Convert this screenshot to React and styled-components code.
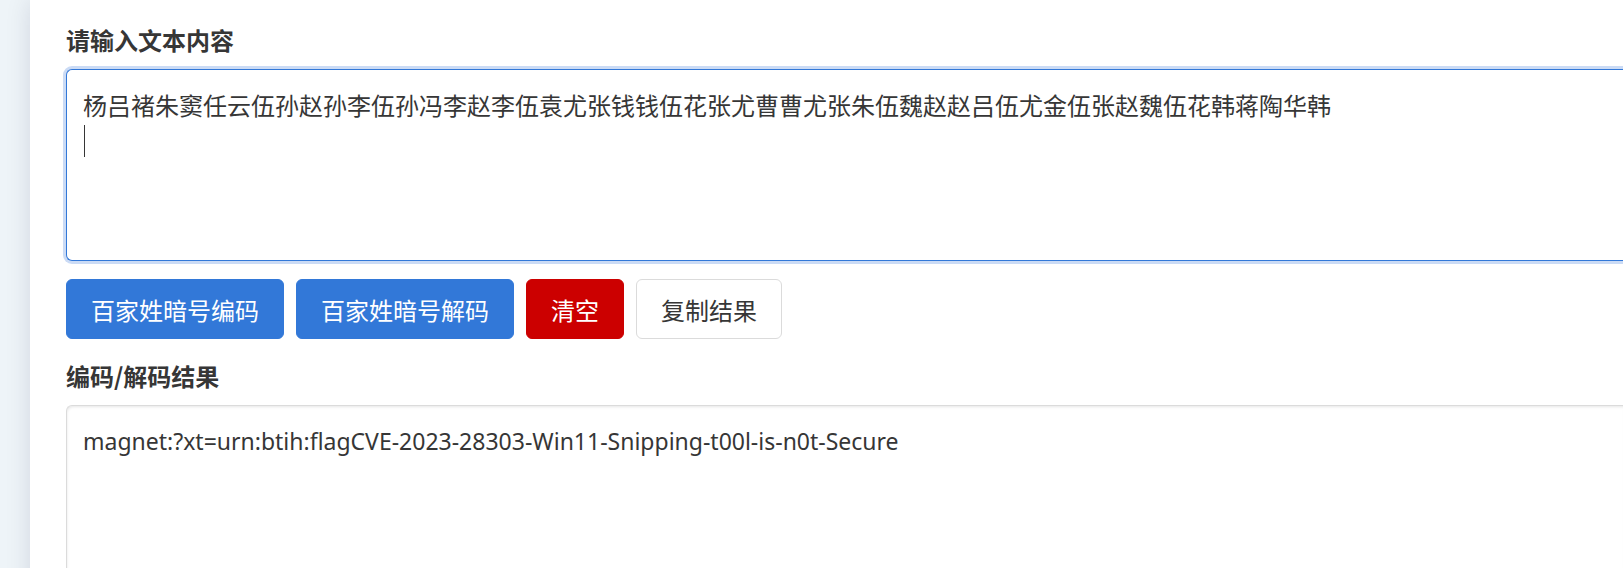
import React, { useEffect, useRef, useState } from "react";
import styled, { createGlobalStyle, css } from "styled-components";

const GlobalStyle = createGlobalStyle`
  * { box-sizing: border-box; }
  body {
    margin: 0;
    background: #eef4f8;
    color: #363636;
    font-family: "Noto Sans", "Noto Sans CJK SC", sans-serif;
    font-size: 24px;
    line-height: 36px;
  }
`;

const Page = styled.div`
  height: 100vh;
  overflow: hidden;
  padding-left: 30px;
`;

const Card = styled.main`
  min-height: 100%;
  display: flex;
  flex-direction: column;
  padding: 22px 0 0 36px;
  background: #fff;
  box-shadow: 0 0 24px rgba(10, 10, 60, 0.12);
`;

const Label = styled.label`
  font-family: "Noto Sans CJK SC", sans-serif;
  font-weight: 700;
  margin-bottom: 11px;
`;

const Field = styled.div`
  position: relative;
`;

const TextArea = styled.textarea`
  display: block;
  width: 100%;
  height: 192px;
  padding: 17px 16px 16px;
  border: 1px solid #dbdbdb;
  border-right: 0;
  border-radius: 6px 0 0 6px;
  background: #fff;
  color: inherit;
  caret-color: ${(p) => (p.$hideCaret ? "transparent" : "auto")};
  font-family: ${(p) => (p.$latin ? '"Noto Sans"' : '"Noto Sans CJK SC"')}, sans-serif;
  font-size: ${(p) => (p.$latin ? "23px" : "24px")};
  line-height: 36px;
  resize: none;
  outline: none;
  box-shadow: inset 1px 2px 3px -1px rgba(10, 10, 10, 0.1);

  &:focus {
    border-color: #3278d8;
    box-shadow: 0 0 0 3px #cbdbf5;
  }
`;

const Caret = styled.span`
  position: absolute;
  top: 56px;
  left: 18px;
  width: 1px;
  height: 32px;
  background: #363636;
  pointer-events: none;
`;

const Actions = styled.div`
  display: flex;
  gap: 12px;
  margin: 18px 0 19px;
`;

const variants = {
  primary: css`
    background: #3278d8;
    border-color: #3278d8;
    color: #fff;
  `,
  danger: css`
    background: #cc0000;
    border-color: #cc0000;
    color: #fff;
  `,
  plain: css`
    background: #fff;
    border-color: #dbdbdb;
    color: #363636;
  `,
};

const Button = styled.button`
  height: 60px;
  padding: 2px 24px 0;
  border: 1px solid;
  border-radius: 6px;
  font-family: "Noto Sans CJK SC", sans-serif;
  font-size: 24px;
  line-height: 36px;
  white-space: nowrap;
  cursor: pointer;
  ${(p) => variants[p.$variant]}
`;

const INPUT =
  "杨吕褚朱窦任云伍孙赵孙李伍孙冯李赵李伍袁尤张钱钱伍花张尤曹曹尤张朱伍魏赵赵吕伍尤金伍张赵魏伍花韩蒋陶华韩\n";
const RESULT = "magnet:?xt=urn:btih:flagCVE-2023-28303-Win11-Snipping-t00l-is-n0t-Secure";

export default function App() {
  const [text, setText] = useState(INPUT);
  const [result, setResult] = useState(RESULT);
  const [resting, setResting] = useState(true);
  const inputRef = useRef(null);

  useEffect(() => {
    const el = inputRef.current;
    el.focus();
    el.setSelectionRange(el.value.length, el.value.length);
  }, []);

  const wake = () => setResting(false);

  const clear = () => {
    wake();
    setText("");
    setResult("");
  };

  return (
    <>
      <GlobalStyle />
      <Page>
        <Card>
          <Label htmlFor="source">请输入文本内容</Label>
          <Field>
            <TextArea
              id="source"
              ref={inputRef}
              spellCheck={false}
              $hideCaret={resting}
              value={text}
              onChange={(e) => setText(e.target.value)}
              onKeyDown={wake}
              onPointerDown={wake}
              onBlur={wake}
            />
            {resting && <Caret aria-hidden="true" />}
          </Field>
          <Actions>
            <Button type="button" $variant="primary">百家姓暗号编码</Button>
            <Button type="button" $variant="primary">百家姓暗号解码</Button>
            <Button type="button" $variant="danger" onClick={clear}>清空</Button>
            <Button type="button" $variant="plain" onClick={() => navigator.clipboard?.writeText(result)}>
              复制结果
            </Button>
          </Actions>
          <Label htmlFor="result">编码/解码结果</Label>
          <Field>
            <TextArea id="result" $latin spellCheck={false} readOnly value={result} />
          </Field>
        </Card>
      </Page>
    </>
  );
}
